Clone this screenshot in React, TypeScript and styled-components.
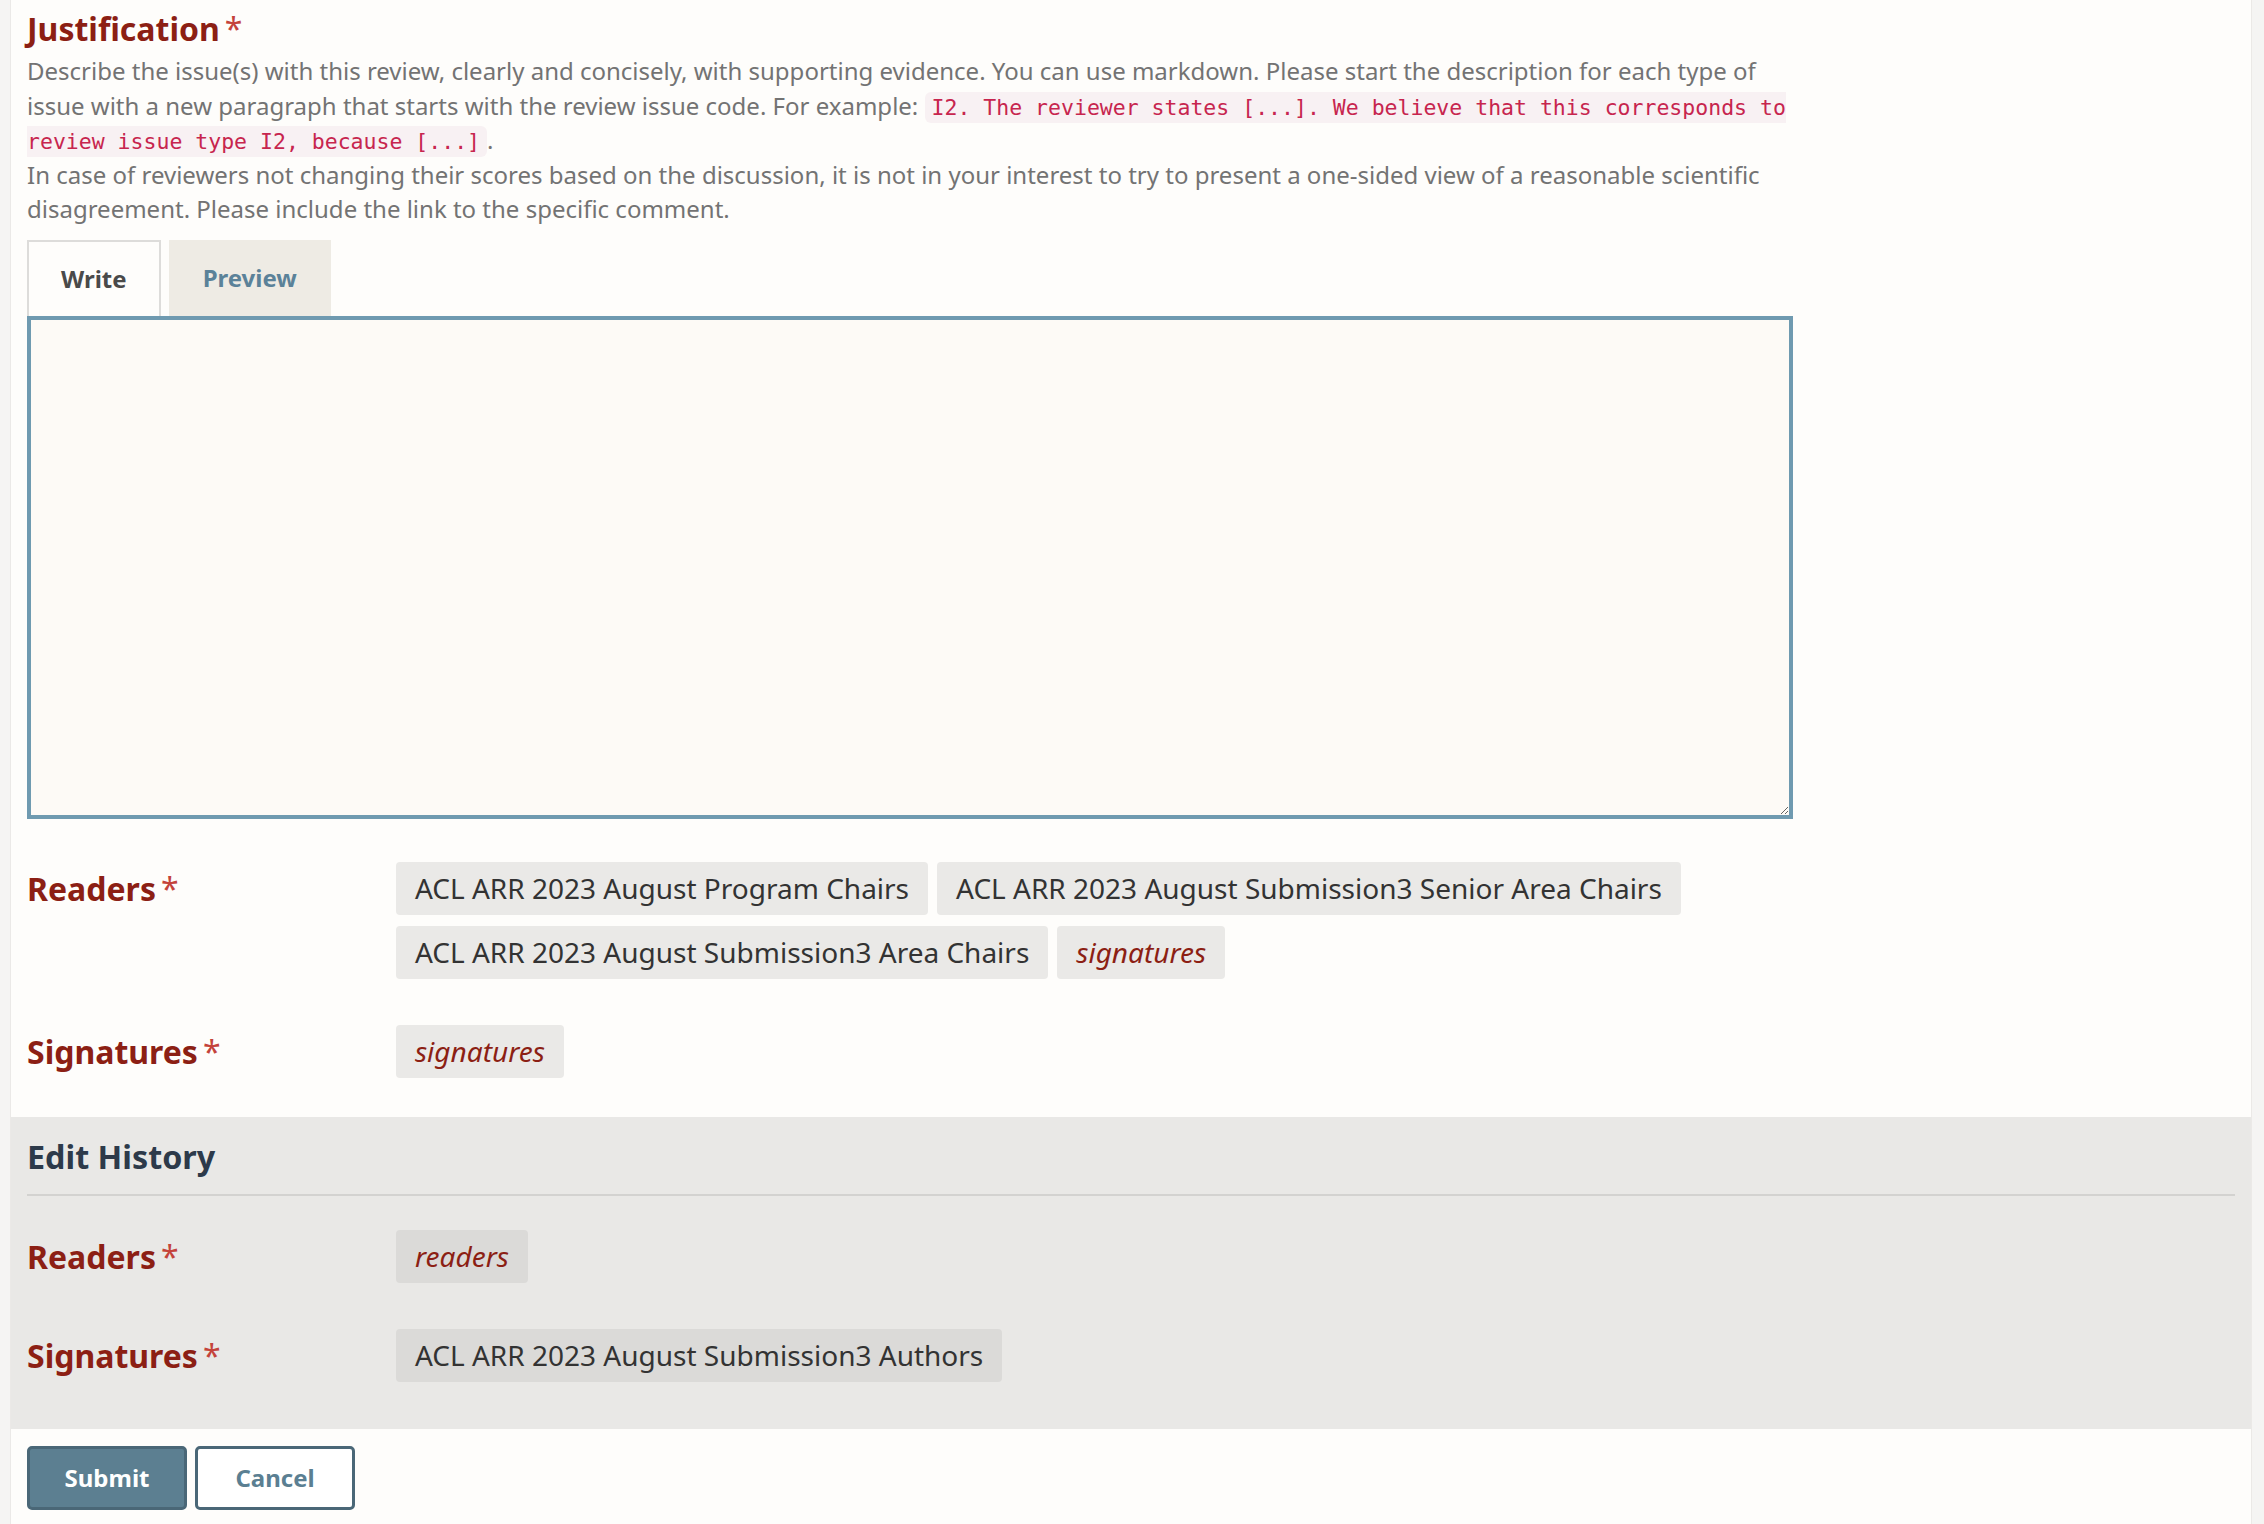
import React from 'react'
import styled, { createGlobalStyle } from 'styled-components'

const GlobalStyle = createGlobalStyle`
  html, body {
    margin: 0;
    padding: 0;
    background: #f5f4f3;
  }
  body {
    font-family: "Noto Sans", "Open Sans", sans-serif;
  }
  * { box-sizing: border-box; }
`

/* ─── Layout ─────────────────────────────────────────── */

const Page = styled.div`
  min-height: 100vh;
  background: #f5f4f3;
  padding: 0 12px 0 10px;
`

const Panel = styled.div`
  background: #fefdfb;
  border-left: 1px solid #ebe9e7;
  border-right: 1px solid #ebe9e7;
  min-height: 1524px;
  display: flex;
  flex-direction: column;
`

const FormBody = styled.div`
  padding: 7px 16px 39px;
`

const Heading = styled.h3`
  margin: 0;
  font-size: 32px;
  line-height: 44px;
  font-weight: 700;
  color: #8c1f14;
`

const Req = styled.span`
  color: #c4433b;
  font-weight: 400;
  margin-left: 5px;
`

const Description = styled.div`
  max-width: 1766px;
  margin-top: 3px;
  font-size: 24px;
  line-height: 34.6px;
  color: #737373;
`

const Code = styled.code`
  font-family: "DejaVu Sans Mono", "Liberation Mono", monospace;
  font-size: 21.5px;
  line-height: 20px;
  color: #c7254e;
  background: #f8f1f3;
  border-radius: 6px;
  padding: 3px 7px;
`

const Tabs = styled.div`
  display: flex;
  gap: 8px;
  margin-top: 13px;
`

const Tab = styled.div<{ $active?: boolean }>`
  height: 76px;
  padding: 0 ${p => (p.$active ? 32 : 34)}px;
  display: flex;
  align-items: center;
  font-size: 24px;
  font-weight: 700;
  color: ${p => (p.$active ? '#4a4a4a' : '#5b8299')};
  background: ${p => (p.$active ? '#fefdfb' : '#eeebe4')};
  border: ${p => (p.$active ? '2px solid #dddcda' : 'none')};
  border-bottom: none;
`

const Editor = styled.textarea`
  display: block;
  width: 1766px;
  height: 503px;
  border: 4px solid #6f9ab0;
  background: #fdfaf6;
  resize: vertical;
  outline: none;
  font-family: "Noto Sans", sans-serif;
  font-size: 24px;
  margin: 0;
`

const FieldRow = styled.div<{ $top: number }>`
  display: grid;
  grid-template-columns: 369px 1fr;
  margin-top: ${p => p.$top}px;
`

const Label = styled.div`
  font-size: 32px;
  line-height: 53px;
  font-weight: 700;
  color: #8c1f14;
`

const Chips = styled.div`
  display: flex;
  flex-wrap: wrap;
  column-gap: 9px;
  row-gap: 11px;
  max-width: 1300px;
`

const Chip = styled.span<{ $italic?: boolean; $dark?: boolean }>`
  height: 53px;
  padding: 0 19px;
  display: inline-flex;
  align-items: center;
  border-radius: 4px;
  font-size: 28px;
  font-style: ${p => (p.$italic ? 'italic' : 'normal')};
  color: ${p => (p.$italic ? '#8c1f14' : '#333333')};
  background: ${p => (p.$dark ? '#dbdad8' : '#eae9e7')};
`

const History = styled.div`
  background: #e9e8e6;
  padding: 17px 16px 47px;
`

const HistoryTitle = styled.h4`
  margin: 0;
  font-size: 32.3px;
  line-height: 44px;
  font-weight: 700;
  color: #2d3a4a;
`

const Rule = styled.hr`
  margin: 16px 0 0;
  border: none;
  border-top: 2px solid #d3d2d0;
  height: 0;
`

const Actions = styled.div`
  display: flex;
  gap: 8px;
  padding: 17px 16px 16px;
`

const Button = styled.button<{ $primary?: boolean }>`
  width: 160px;
  height: 64px;
  border: 3px solid #4a6777;
  border-radius: 5px;
  background: ${p => (p.$primary ? '#5c7f91' : '#ffffff')};
  color: ${p => (p.$primary ? '#ffffff' : '#5b7f92')};
  font-family: "Noto Sans", sans-serif;
  font-size: 24px;
  font-weight: 700;
  cursor: pointer;
`

/* ─── Component ──────────────────────────────────────── */

export default function App() {
  return (
    <>
      <GlobalStyle />
      <Page>
        <Panel>
          <FormBody>
            <Heading>
              Justification<Req>*</Req>
            </Heading>
            <Description>
              Describe the issue(s) with this review, clearly and concisely, with supporting evidence. You can use
              markdown. Please start the description for each type of issue with a new paragraph that starts with the
              review issue code. For example:{' '}
              <Code>I2. The reviewer states [...]. We believe that this corresponds to review issue type I2, because [...]</Code>.
              <br />
              In case of reviewers not changing their scores based on the discussion, it is not in your interest to try
              to present a one-sided view of a reasonable scientific disagreement. Please include the link to the specific
              comment.
            </Description>

            <Tabs>
              <Tab $active>Write</Tab>
              <Tab>Preview</Tab>
            </Tabs>
            <Editor />

            <FieldRow $top={43}>
              <Label>
                Readers<Req>*</Req>
              </Label>
              <Chips>
                <Chip>ACL ARR 2023 August Program Chairs</Chip>
                <Chip>ACL ARR 2023 August Submission3 Senior Area Chairs</Chip>
                <Chip>ACL ARR 2023 August Submission3 Area Chairs</Chip>
                <Chip $italic>signatures</Chip>
              </Chips>
            </FieldRow>

            <FieldRow $top={46}>
              <Label>
                Signatures<Req>*</Req>
              </Label>
              <Chips>
                <Chip $italic>signatures</Chip>
              </Chips>
            </FieldRow>
          </FormBody>

          <History>
            <HistoryTitle>Edit History</HistoryTitle>
            <Rule />
            <FieldRow $top={34}>
              <Label>
                Readers<Req>*</Req>
              </Label>
              <Chips>
                <Chip $italic $dark>readers</Chip>
              </Chips>
            </FieldRow>
            <FieldRow $top={46}>
              <Label>
                Signatures<Req>*</Req>
              </Label>
              <Chips>
                <Chip $dark>ACL ARR 2023 August Submission3 Authors</Chip>
              </Chips>
            </FieldRow>
          </History>

          <Actions>
            <Button $primary>Submit</Button>
            <Button>Cancel</Button>
          </Actions>
        </Panel>
      </Page>
    </>
  )
}
